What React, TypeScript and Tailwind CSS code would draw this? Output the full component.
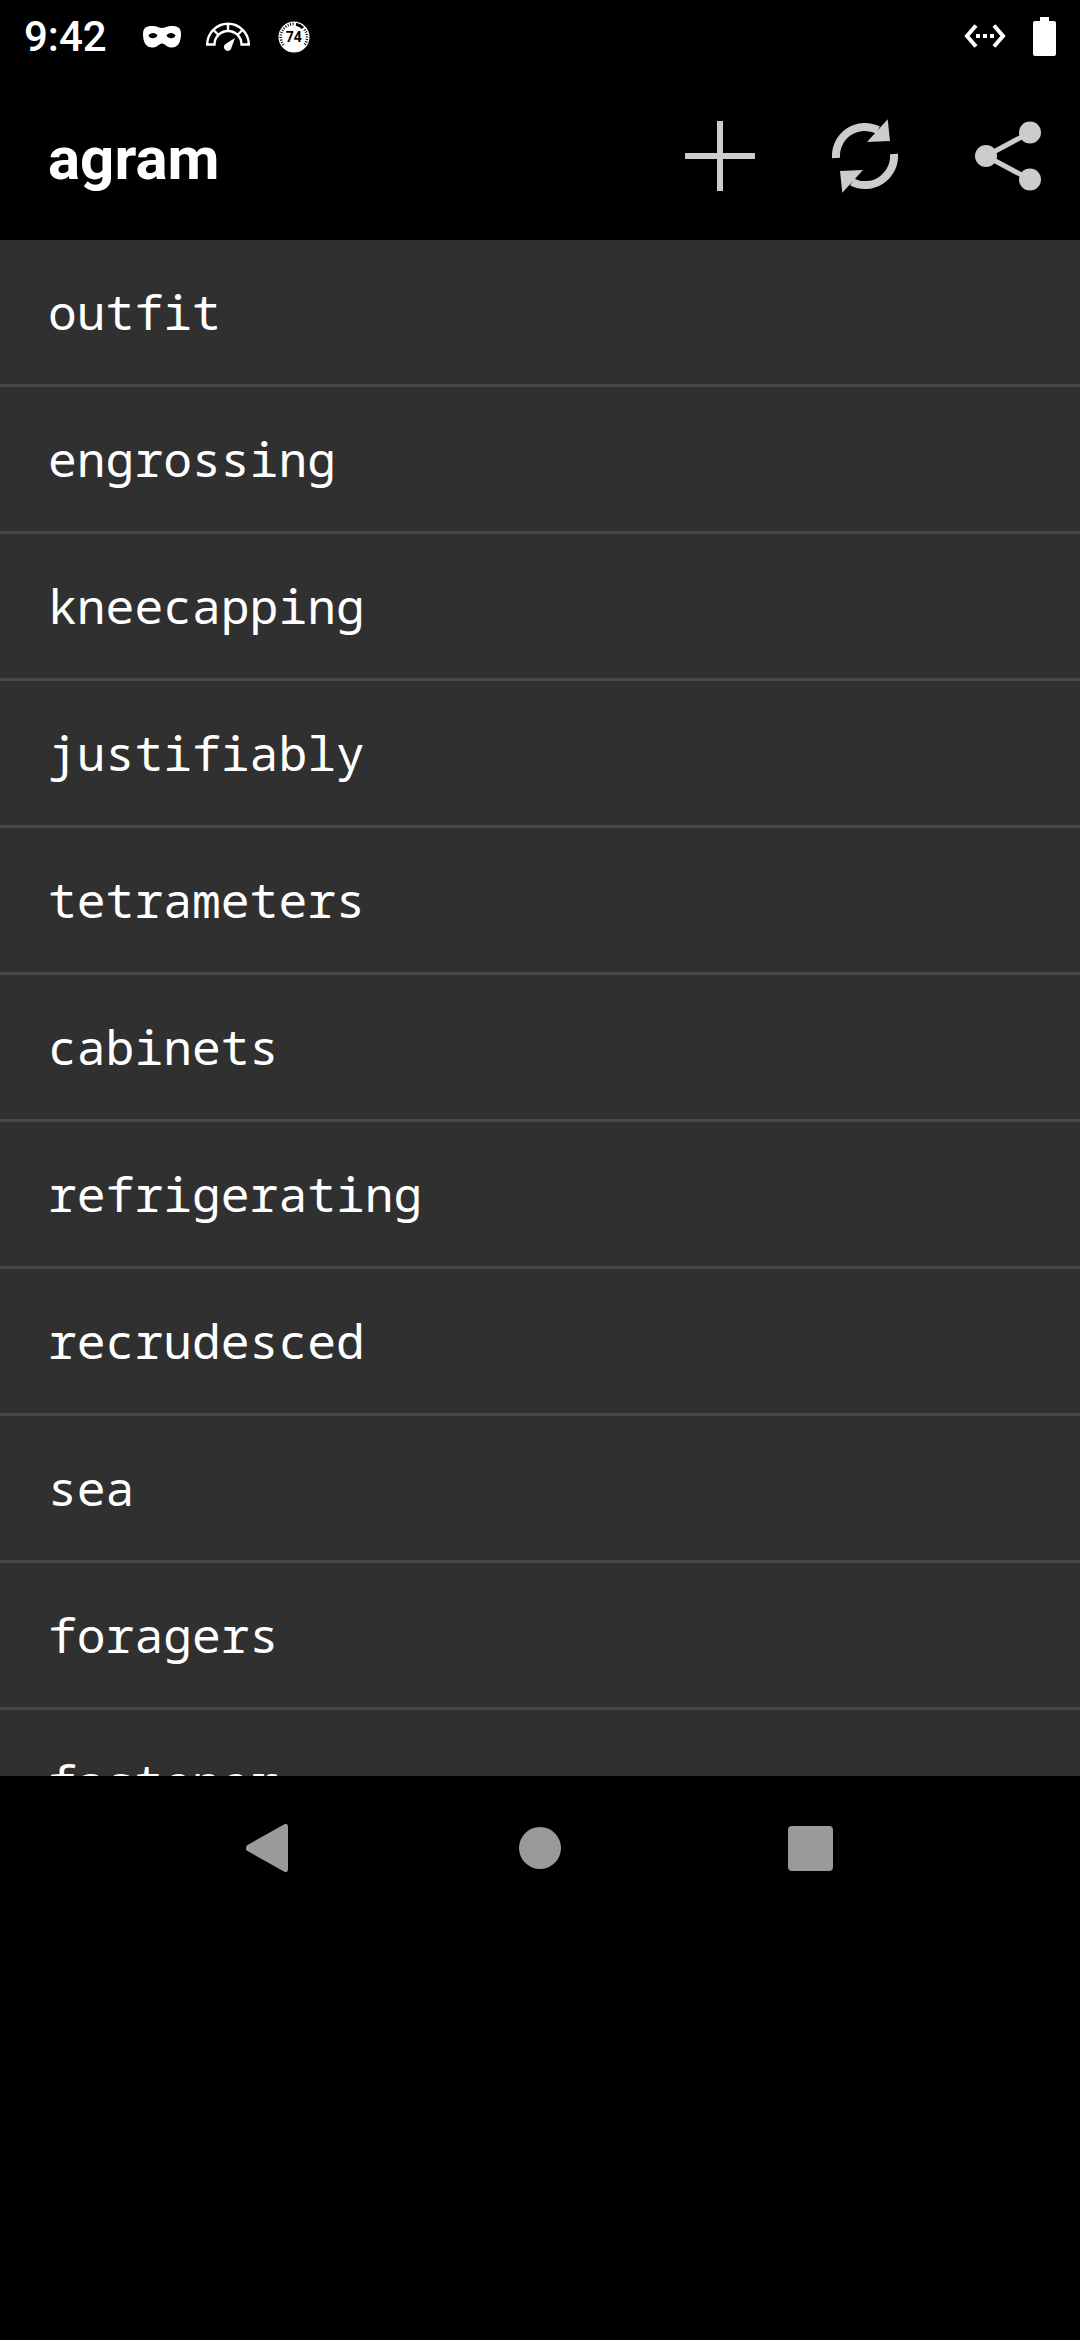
const words = [
  "outfit",
  "engrossing",
  "kneecapping",
  "justifiably",
  "tetrameters",
  "cabinets",
  "refrigerating",
  "recrudesced",
  "sea",
  "foragers",
  "fastener",
];

function MaskIcon() {
  return (
    <svg className="h-6 w-10" viewBox="0 0 40 24" aria-hidden="true">
      <path
        fill="#fff"
        fillRule="evenodd"
        d="M10 1C14 .5 17 3 20 3S26 .5 30 1C36 1 39 3 39 9C39 17 36 23 29 22.500C24 22 23 18.500 20 18.500S16 22 11 22.500C4 23 1 17 1 9C1 3 4 1 10 1ZM6.500 10.500C7.500 14 14 14 15.500 10.500C14 7 8 7 6.500 10.500ZM33.500 10.500C32 7 26 7 24.500 10.500C26 14 32.500 14 33.500 10.500Z"
      />
    </svg>
  );
}

function GaugeIcon() {
  return (
    <svg className="h-8 w-11" viewBox="0 0 44 32" aria-hidden="true">
      <g fill="none" stroke="#fff" strokeWidth="2.4">
        <path d="M1.200 23.500A20.800 20.800 0 0 1 42.800 23.500H35.500A13.500 13.500 0 0 0 8.500 23.500Z" />
        <path d="M22 3V10M7.500 9L12.500 14M36.500 9L31.500 14" />
      </g>
      <path fill="#fff" d="M29 17L25.500 26.500A3.800 3.800 0 1 1 19.500 23Z" />
    </svg>
  );
}

function BadgeIcon() {
  return (
    <span className="relative grid size-8 place-items-center">
      <svg className="absolute inset-0 size-8" viewBox="0 0 32 32" aria-hidden="true">
        <circle cx="16" cy="16" r="15.500" fill="#fff" />
        <path
          d="M5.500 24A13 13 0 0 1 16 3"
          fill="none"
          stroke="#000"
          strokeWidth="2.500"
          strokeDasharray="1 1.500"
        />
        <path d="M18 3.200A12.800 12.800 0 0 1 25 7" fill="none" stroke="#000" strokeWidth="3" />
        <path
          d="M26.500 8.500A13 13 0 0 1 26.500 24"
          fill="none"
          stroke="#000"
          strokeWidth="2.500"
          strokeDasharray="1 1.500"
        />
      </svg>
      <span className="relative text-[14px] leading-4 font-bold text-black">74</span>
    </span>
  );
}

function StatusBar() {
  return (
    <header className="flex h-[72px] items-center justify-between px-6 text-white">
      <div className="flex items-center pt-0.5">
        <time className="text-[42px] leading-[48px] font-medium">9:42</time>
        <div className="ml-[35px] flex items-center">
          <MaskIcon />
          <span className="ml-6">
            <GaugeIcon />
          </span>
          <span className="ml-7">
            <BadgeIcon />
          </span>
        </div>
      </div>
      <div className="flex items-center gap-[27px]">
        <svg className="h-6 w-[42px]" viewBox="0 0 42 24" aria-hidden="true">
          <path
            d="M12 1.500L3 12L12 22.500M30 1.500L39 12L30 22.500"
            fill="none"
            stroke="#fff"
            strokeWidth="4"
          />
          <path d="M12 10h4v4h-4zM19 10h4v4h-4zM26 10h4v4h-4z" fill="#fff" />
        </svg>
        <svg className="h-[39px] w-[23px]" viewBox="0 0 23 39" aria-hidden="true">
          <path
            fill="#fff"
            d="M7 0H16V4H21A2 2 0 0 1 23 6V37A2 2 0 0 1 21 39H2A2 2 0 0 1 0 37V6A2 2 0 0 1 2 4H7Z"
          />
        </svg>
      </div>
    </header>
  );
}

function AppBar() {
  return (
    <div className="flex h-[168px] items-center justify-between pl-12">
      <h1 className="pt-1.5 text-[60px] leading-[72px] font-bold text-white">agram</h1>
      <div className="flex h-full items-center text-[#cccccc]">
        <button type="button" aria-label="Add word" className="grid h-full w-36 place-items-center">
          <svg className="size-[72px]" viewBox="0 0 72 72" aria-hidden="true">
            <path d="M36 1V71M1 36H71" stroke="currentColor" strokeWidth="6" />
          </svg>
        </button>
        <button type="button" aria-label="Refresh" className="grid h-full w-36 place-items-center">
          <svg className="size-20" viewBox="0 0 80 80" aria-hidden="true">
            <g id="arc">
              <path
                d="M12 42A29 29 0 0 1 54 14"
                fill="none"
                stroke="currentColor"
                strokeWidth="8"
              />
              <path d="M63.700 3.300L66 25L43 26Z" fill="currentColor" />
            </g>
            <use href="#arc" transform="rotate(180 41 40)" />
          </svg>
        </button>
        <button type="button" aria-label="Share" className="grid h-full w-36 place-items-center">
          <svg className="size-[72px]" viewBox="0 0 72 72" aria-hidden="true">
            <path
              d="M58 12.500L14 36L58 59.500"
              fill="none"
              stroke="currentColor"
              strokeWidth="5"
            />
            <circle cx="14" cy="36" r="11" fill="currentColor" />
            <circle cx="58" cy="12.500" r="11" fill="currentColor" />
            <circle cx="58" cy="59.500" r="11" fill="currentColor" />
          </svg>
        </button>
      </div>
    </div>
  );
}

function NavBar() {
  return (
    <nav className="mx-auto grid h-36 w-3/4 grid-cols-3 text-[#9a9a9a]">
      <button type="button" aria-label="Back" className="grid place-items-center">
        <svg className="size-12" viewBox="0 0 48 48" aria-hidden="true">
          <path
            fill="currentColor"
            d="M38 .500Q42 -1.500 42 3V45Q42 49.500 38 47.500L1.500 27Q-2 24 1.500 21Z"
          />
        </svg>
      </button>
      <button type="button" aria-label="Home" className="grid place-items-center">
        <span className="size-[42px] rounded-full bg-[#9a9a9a]" />
      </button>
      <button type="button" aria-label="Recent apps" className="grid place-items-center">
        <span className="size-[45px] rounded-[4px] bg-[#9a9a9a]" />
      </button>
    </nav>
  );
}

export default function App() {
  return (
    <div className="min-h-screen bg-black font-['Roboto',sans-serif]">
      <StatusBar />
      <AppBar />
      <main className="h-[1536px] overflow-hidden bg-[#303030]">
        <ul className="divide-y-3 divide-[#484848]">
          {words.map((word) => (
            <li
              key={word}
              className="box-content flex h-36 items-center px-12 font-['Droid_Sans_Mono','Noto_Sans_Mono','DejaVu_Sans_Mono',monospace] text-[48px] leading-[60px] text-white"
            >
              {word}
            </li>
          ))}
        </ul>
      </main>
      <NavBar />
    </div>
  );
}
